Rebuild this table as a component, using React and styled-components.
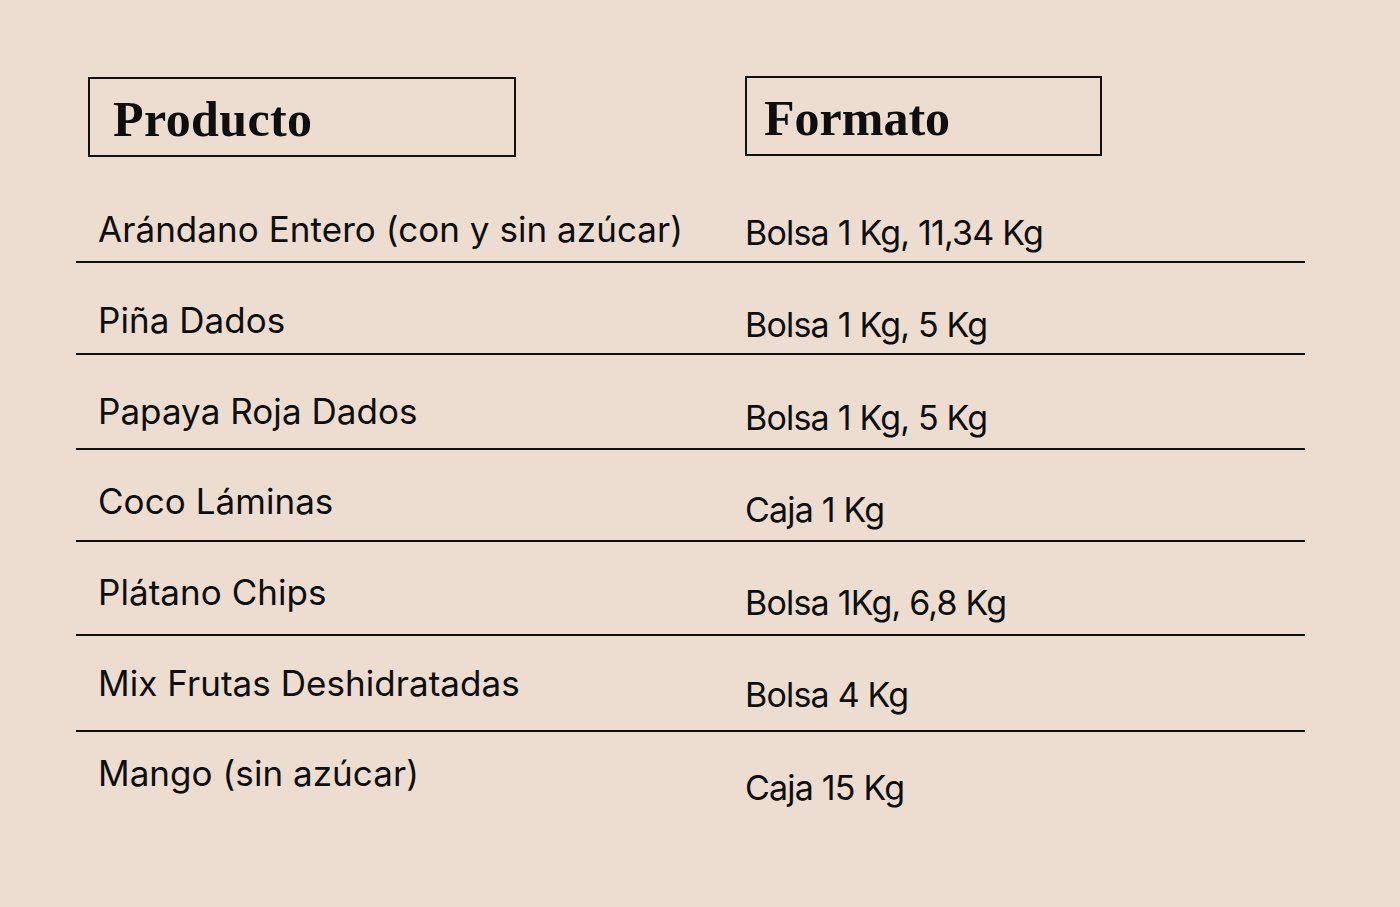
import React from "react";
import styled, { createGlobalStyle } from "styled-components";

const GlobalStyle = createGlobalStyle`
  html, body {
    margin: 0;
    padding: 0;
    background: #eddcd0;
  }
  body {
    font-family: "Inter", "Noto Sans", sans-serif;
    color: #0e0e0e;
  }
`;

const Page = styled.div`
  width: 1400px;
  height: 907px;
  background: #eddcd0;
  padding: 76px 0 0 76px;
  box-sizing: border-box;
`;

const Table = styled.div`
  width: 1229px;
`;

const HeaderRow = styled.div`
  display: grid;
  grid-template-columns: 669px 1fr;
  height: 80px;
`;

const HeaderBox = styled.div`
  box-sizing: border-box;
  width: ${(p) => p.w}px;
  height: 80px;
  margin-left: ${(p) => p.ml}px;
  margin-top: ${(p) => p.mt}px;
  border: 2px solid #111;
  padding-left: ${(p) => p.pl}px;
  display: flex;
  align-items: center;
  font-family: "Liberation Serif", "DejaVu Serif", serif;
  font-weight: 700;
  font-size: 50px;
  letter-spacing: ${(p) => p.ls}px;
  line-height: 1;
  padding-top: 4px;
`;

const Row = styled.div`
  display: grid;
  grid-template-columns: 669px 1fr;
  box-sizing: border-box;
  height: ${(p) => p.h}px;
  border-bottom: ${(p) => (p.last ? "none" : "2px solid #111")};
`;

const ProductCell = styled.div`
  align-self: end;
  margin-bottom: ${(p) => p.mb}px;
  padding-left: 22px;
  font-size: 35px;
  line-height: 40px;
  letter-spacing: 0.05px;
  white-space: nowrap;
`;

const FormatCell = styled.div`
  align-self: end;
  margin-bottom: ${(p) => p.mb}px;
  font-size: 34px;
  line-height: 40px;
  letter-spacing: -0.8px;
  white-space: nowrap;
`;

const rows = [
  { product: "Arándano Entero (con y sin azúcar)", format: "Bolsa 1 Kg, 11,34 Kg", h: 107, pb: 12, fb: 8 },
  { product: "Piña Dados", format: "Bolsa 1 Kg, 5 Kg", h: 92, pb: 13, fb: 8 },
  { product: "Papaya Roja Dados", format: "Bolsa 1 Kg, 5 Kg", h: 95, pb: 17, fb: 10 },
  { product: "Coco Láminas", format: "Caja 1 Kg", h: 92, pb: 19, fb: 10 },
  { product: "Plátano Chips", format: "Bolsa 1Kg, 6,8 Kg", h: 94, pb: 22, fb: 11 },
  { product: "Mix Frutas Deshidratadas", format: "Bolsa 4 Kg", h: 96, pb: 27, fb: 15 },
  { product: "Mango (sin azúcar)", format: "Caja 15 Kg", h: 96, pb: 35, fb: 20 },
];

export default function App() {
  return (
    <Page>
      <GlobalStyle />
      <Table>
        <HeaderRow>
          <HeaderBox w={428} ml={12} mt={1} pl={23} ls={0.4}>Producto</HeaderBox>
          <HeaderBox w={357} ml={0} mt={0} pl={17} ls={0}>Formato</HeaderBox>
        </HeaderRow>
        {rows.map((r, i) => (
          <Row key={r.product} h={r.h} last={i === rows.length - 1}>
            <ProductCell mb={r.pb}>{r.product}</ProductCell>
            <FormatCell mb={r.fb}>{r.format}</FormatCell>
          </Row>
        ))}
      </Table>
    </Page>
  );
}
